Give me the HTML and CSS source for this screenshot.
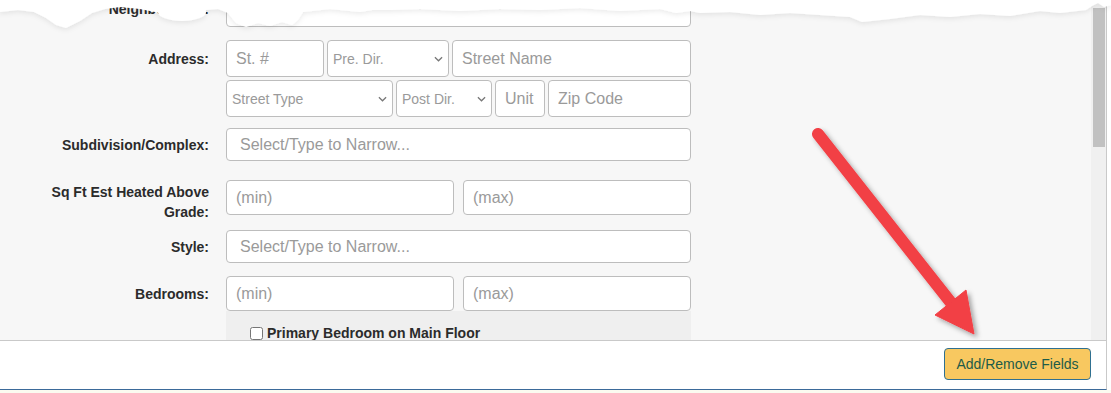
FILE: index.html
```html
<!DOCTYPE html>
<html lang="en">
<head>
    <meta charset="UTF-8">
    <meta name="viewport" content="width=device-width, initial-scale=1.0">
    <title>Property Search - Fields</title>
    <link rel="stylesheet" href="styles.css">
</head>
<body>
    <div class="window">
        <div class="pane">
            <div class="form-area">
                <div class="search-form">
                    <div class="field-row row-neighborhood">
                        <label class="field-label">Neighborhood:</label>
                        <div class="fake-select chosen">
                            <span class="select-text">. . .</span>
                            <svg class="chevron" width="10" height="6" viewBox="0 0 10 6"><path d="M1 1l4 4 4-4" fill="none" stroke="#777" stroke-width="1.4"/></svg>
                        </div>
                    </div>

                    <div class="field-row row-address">
                        <label class="field-label">Address:</label>
                        <div class="address-fields">
                            <div class="address-line line-one">
                                <input class="text-input tall" type="text" placeholder="St. #">
                                <div class="fake-select tall">
                                    <span class="select-text">Pre. Dir.</span>
                                    <svg class="chevron" width="9" height="6" viewBox="0 0 10 6"><path d="M1 1l4 4 4-4" fill="none" stroke="#777" stroke-width="1.4"/></svg>
                                </div>
                                <input class="text-input tall" type="text" placeholder="Street Name">
                            </div>
                            <div class="address-line line-two">
                                <div class="fake-select tall">
                                    <span class="select-text">Street Type</span>
                                    <svg class="chevron" width="9" height="6" viewBox="0 0 10 6"><path d="M1 1l4 4 4-4" fill="none" stroke="#777" stroke-width="1.4"/></svg>
                                </div>
                                <div class="fake-select tall">
                                    <span class="select-text">Post Dir.</span>
                                    <svg class="chevron" width="9" height="6" viewBox="0 0 10 6"><path d="M1 1l4 4 4-4" fill="none" stroke="#777" stroke-width="1.4"/></svg>
                                </div>
                                <input class="text-input tall" type="text" placeholder="Unit">
                                <input class="text-input tall" type="text" placeholder="Zip Code">
                            </div>
                        </div>
                    </div>

                    <div class="field-row row-subdivision">
                        <label class="field-label">Subdivision/Complex:</label>
                        <input class="text-input chosen-input" type="text" placeholder="Select/Type to Narrow...">
                    </div>

                    <div class="field-row row-sqft">
                        <label class="field-label two-line">Sq Ft Est Heated Above Grade:</label>
                        <div class="range-fields">
                            <input class="text-input" type="text" placeholder="(min)">
                            <input class="text-input" type="text" placeholder="(max)">
                        </div>
                    </div>

                    <div class="field-row row-style">
                        <label class="field-label">Style:</label>
                        <input class="text-input chosen-input" type="text" placeholder="Select/Type to Narrow...">
                    </div>

                    <div class="field-row row-bedrooms">
                        <label class="field-label">Bedrooms:</label>
                        <div class="bedroom-group">
                            <div class="range-fields">
                                <input class="text-input" type="text" placeholder="(min)">
                                <input class="text-input" type="text" placeholder="(max)">
                            </div>
                            <div class="option-panel">
                                <label class="check-option">
                                    <input type="checkbox">
                                    <span>Primary Bedroom on Main Floor</span>
                                </label>
                            </div>
                        </div>
                    </div>
                </div>
            </div>
            <div class="scrollbar">
                <div class="scroll-thumb"></div>
            </div>
        </div>

        <div class="footer">
            <button class="btn-fields" type="button">Add/Remove Fields</button>
        </div>

        <!-- torn paper edge from the screen capture -->
        <svg class="torn-edge" width="1111" height="40" viewBox="0 0 1111 40">
            <defs>
                <filter id="tornShadow" x="-5%" y="-50%" width="110%" height="200%">
                    <feGaussianBlur in="SourceAlpha" stdDeviation="2.5"/>
                    <feOffset dy="2" result="blur"/>
                    <feFlood flood-color="#000" flood-opacity="0.08"/>
                    <feComposite in2="blur" operator="in"/>
                    <feMerge>
                        <feMergeNode/>
                        <feMergeNode in="SourceGraphic"/>
                    </feMerge>
                </filter>
            </defs>
            <g filter="url(#tornShadow)" fill="#fff">
                <path d="M0 0H1111V5L1104 7L1098 3L1092 6L1086 10L1060 13L1040 11L1010 16L980 14L950 17L920 15L890 19L862 22L850 17L820 15L790 13L760 15L730 12L700 13L690 11L676 13L660 9L620 11L580 8L540 10L500 9L460 11L420 9L390 10L372 10L360 12L330 9L303 12L298 20L292 25L282 22L270 26L258 23L246 27L236 23L228 13L218 9L206 10L200 16L188 20L170 19L160 13L140 9L120 7L105 9L92 13L80 21L66 28L56 25L46 18L34 12L18 10L0 12Z"/>
                <ellipse cx="182" cy="12" rx="24" ry="9"/>
            </g>
        </svg>

        <!-- annotation arrow -->
        <svg class="callout-arrow" width="1111" height="393" viewBox="0 0 1111 393">
            <defs>
                <filter id="arrowShadow" x="-20%" y="-20%" width="140%" height="140%">
                    <feDropShadow dx="3" dy="3" stdDeviation="2.5" flood-color="#000" flood-opacity="0.35"/>
                </filter>
            </defs>
            <g filter="url(#arrowShadow)" fill="#f23f45" stroke="#f23f45">
                <line x1="818" y1="134" x2="952" y2="304" stroke-width="12" stroke-linecap="round"/>
                <polygon points="974,334 935,315 966,290" stroke-width="1" stroke-linejoin="round"/>
            </g>
        </svg>
    </div>
    <div class="page-foot"></div>
</body>
</html>
```

FILE: styles.css
```css
* {
    margin: 0;
    padding: 0;
    box-sizing: border-box;
}

body {
    font-family: "Liberation Sans", Arial, sans-serif;
    background: #fff;
    color: #333;
    width: 1111px;
    height: 393px;
    overflow: hidden;
}

.window {
    position: relative;
    width: 1107px;
    border-right: 1px solid #c9c9c9;
    border-bottom: 1px solid #3b6a9a;
}

.pane {
    display: flex;
    height: 341px;
    border-bottom: 1px solid #c9c9c9;
    overflow: hidden;
}

.form-area {
    flex: 1;
    background: #f7f7f7;
}

.search-form {
    margin-top: -9px;
    display: flex;
    flex-direction: column;
}

.field-row {
    display: grid;
    grid-template-columns: 209px 465px;
    column-gap: 17px;
    align-items: start;
}

.field-label {
    font-size: 14px;
    font-weight: 700;
    line-height: 20px;
    text-align: right;
    color: #2b2b2b;
    padding: 8px 0 0 46px;
}

.field-label.two-line {
    padding-top: 2px;
}

.row-neighborhood { margin-bottom: 13px; }
.row-address { margin-bottom: 11px; }
.row-subdivision { margin-bottom: 19px; }
.row-sqft { margin-bottom: 8px; }
.row-style { margin-bottom: 13px; }

.row-address .field-label {
    padding-top: 9px;
}

.row-subdivision .field-label,
.row-style .field-label {
    padding-top: 7px;
}

.text-input {
    width: 100%;
    height: 35px;
    border: 1px solid #bdbdbd;
    border-radius: 4px;
    background: #fff;
    padding: 0 9px;
    font-family: inherit;
    font-size: 16px;
    color: #333;
    outline: none;
}

.text-input::placeholder {
    color: #9a9a9a;
}

.text-input.tall {
    height: 37px;
}

.chosen-input {
    height: 33px;
    padding-left: 13px;
}

.fake-select {
    display: flex;
    align-items: center;
    justify-content: space-between;
    height: 35px;
    border: 1px solid #bdbdbd;
    border-radius: 4px;
    background: #fff;
    padding: 0 5px 0 5px;
    font-size: 14px;
    color: #9a9a9a;
}

.fake-select.tall {
    height: 37px;
}

.fake-select.chosen {
    height: 36px;
    padding-left: 13px;
    padding-right: 9px;
}

.select-text {
    white-space: nowrap;
}

.chevron {
    flex-shrink: 0;
}

.address-fields {
    display: flex;
    flex-direction: column;
    gap: 3px;
}

.address-line {
    display: grid;
    gap: 3px;
}

.line-one {
    grid-template-columns: 98px 122px 1fr;
}

.line-two {
    grid-template-columns: 167px 96px 50px 1fr;
}

.range-fields {
    display: grid;
    grid-template-columns: 1fr 1fr;
    gap: 9px;
}

.option-panel {
    background: #efefef;
    height: 44px;
    padding: 14px 0 0 24px;
}

.check-option {
    display: flex;
    align-items: center;
    gap: 4px;
    font-size: 14px;
    font-weight: 700;
    color: #2b2b2b;
}

.check-option input {
    width: 13px;
    height: 13px;
    margin: 0;
}

.scrollbar {
    width: 15px;
    background: #f0f0f0;
    padding: 8px 1px 0 2px;
}

.scroll-thumb {
    height: 139px;
    background: #c1c1c1;
}

.footer {
    height: 48px;
    background: #fff;
    display: flex;
    justify-content: flex-end;
    align-items: flex-start;
    padding: 7px 15px 0 0;
}

.btn-fields {
    width: 147px;
    height: 32px;
    background: #f8c860;
    border: 1px solid #2f7091;
    border-radius: 4px;
    font-family: inherit;
    font-size: 14px;
    color: #1d5c48;
    cursor: pointer;
}

.torn-edge,
.callout-arrow {
    position: absolute;
    top: 0;
    left: 0;
    pointer-events: none;
}

.page-foot {
    height: 4px;
    background: #fbfbf0;
}
```
